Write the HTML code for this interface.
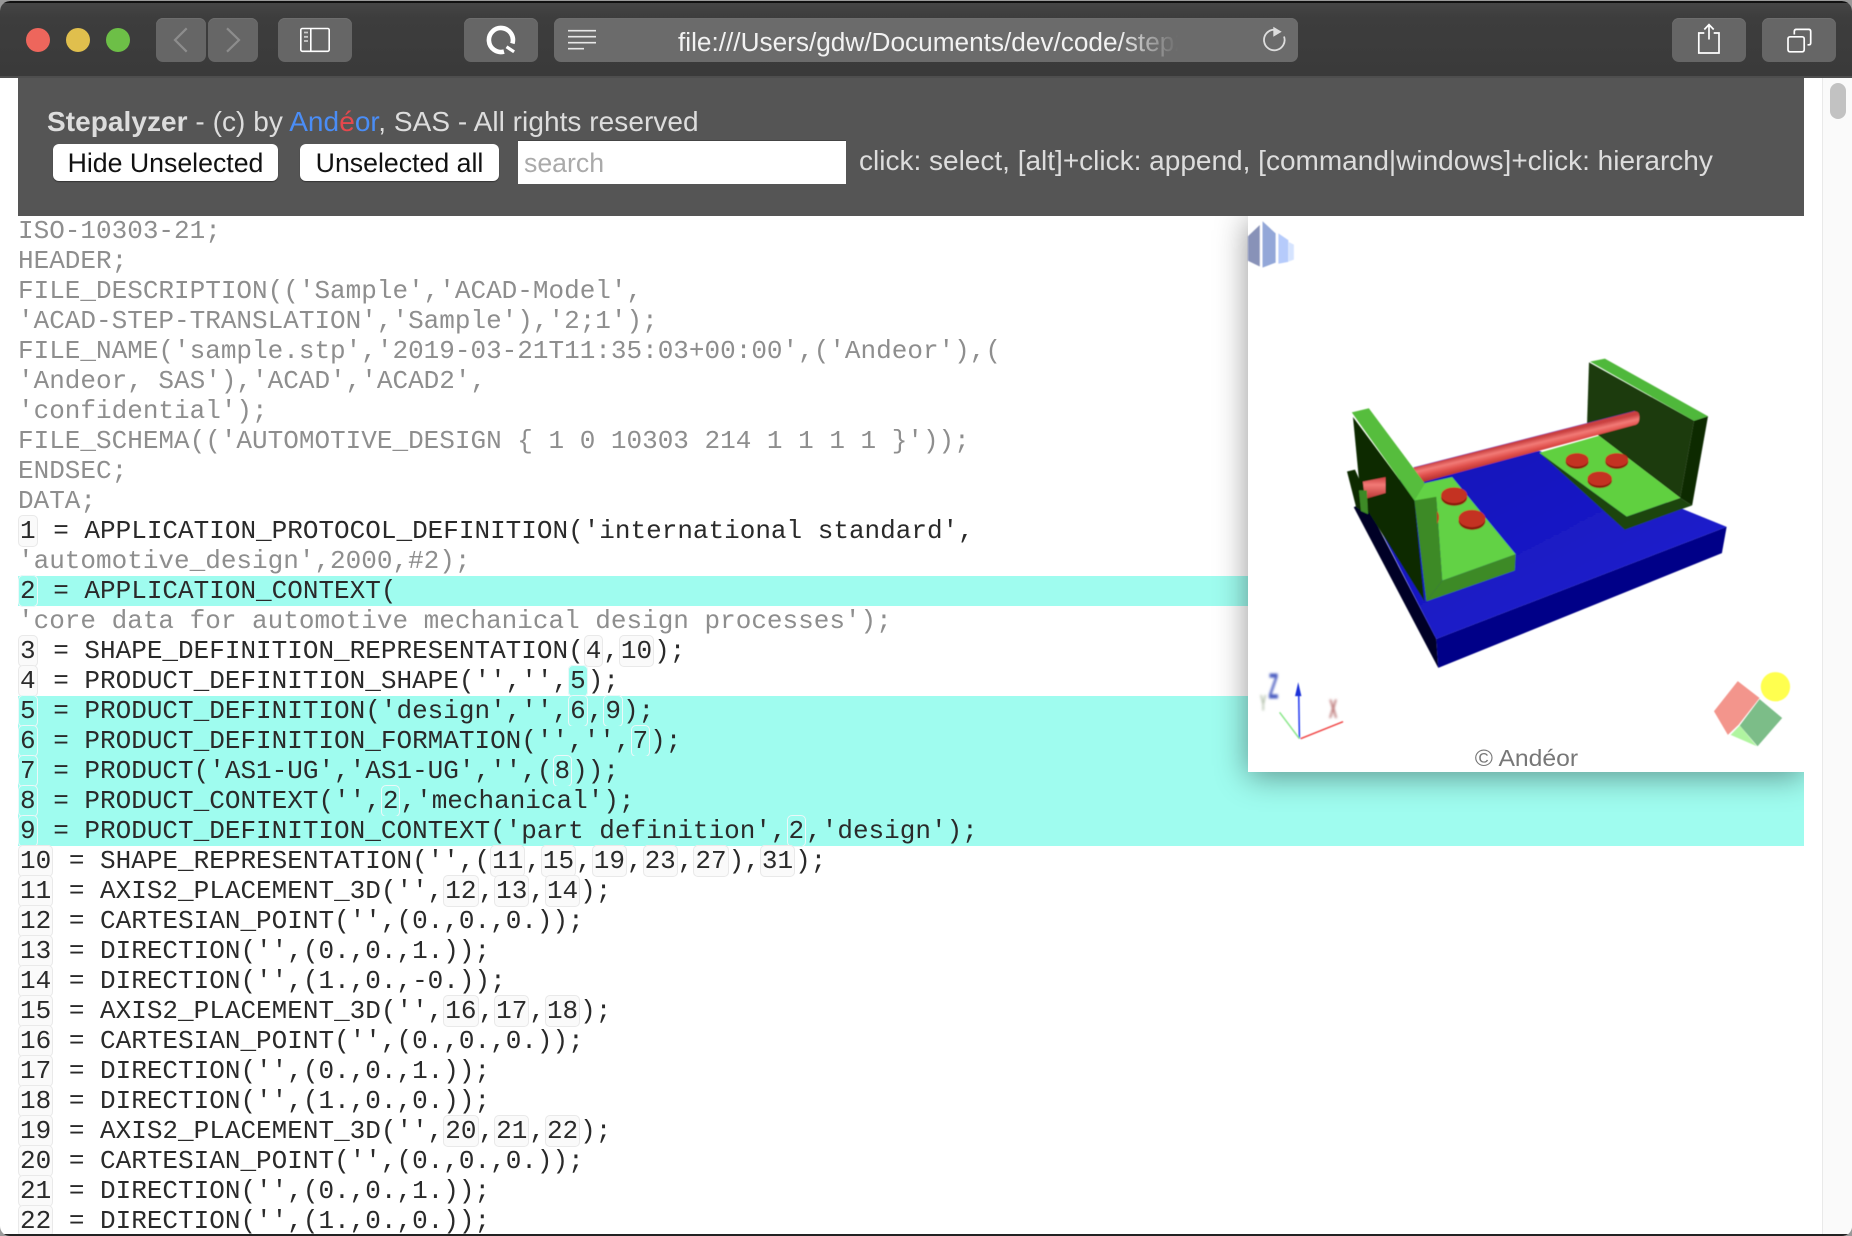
<!DOCTYPE html>
<html><head><meta charset="utf-8"><title>Stepalyzer</title>
<style>
html,body{margin:0;padding:0;width:1852px;height:1236px;overflow:hidden;background:#999}
#win{position:absolute;left:0;top:1px;width:1852px;height:1235px;border-radius:10px;overflow:hidden;background:#fff;font-family:"Liberation Sans",sans-serif}
#tb{position:absolute;left:0;top:0;width:1852px;height:77px;background:linear-gradient(#454545,#3d3d3d 20%,#3a3a3a);border-top:2px solid #111;box-sizing:border-box;border-bottom:2px solid #4e4e4e}
.b{position:absolute;top:15px;height:44px;background:#666;border-radius:7px;box-shadow:inset 0 1px 0 #6e6e6e}
.t{position:absolute;left:0;top:0}
#hd{position:absolute;left:18px;top:77px;width:1786px;height:138px;background:#555;z-index:3;color:#ddd;font-size:28px}
#hd .x{position:absolute;white-space:pre;line-height:32px}
.btn{position:absolute;top:66px;height:37px;background:#fff;border-radius:6px;color:#111;line-height:39px;text-align:center;box-shadow:0 1px 1px rgba(0,0,0,.4);font-size:26.7px}
#srch{position:absolute;left:500px;top:62px;width:328px;height:44px;background:#fff;border-top:1px solid #444;box-sizing:border-box;color:#aaa;line-height:45px;padding-left:6px;font-size:26.7px}
#code{position:absolute;left:0;top:215px;width:1822px;font-family:"Liberation Mono",monospace;font-size:26px;line-height:30px;color:#8e8e8e}
.l{position:absolute;left:18px;width:1786px;height:30px;white-space:pre}
.d{color:#2a2a2a}
.h{background:#9ffcef}
.d i{font-style:normal;border:1px solid #e9e9e9;background:#fafafa;padding:0 1px;border-radius:5px}
.h i{border-color:#ecf8f8;background:#9ffcef}
.d i.s{background:#9ffcef;border-color:#ecf8f8}
#vw{position:absolute;left:1248px;top:215px;width:556px;height:556px;background:#fff;box-shadow:0 4px 30px rgba(0,0,0,.42);z-index:2;clip-path:inset(-40px 0 -40px -40px)}
#sc{position:absolute;left:1822px;top:77px;width:30px;height:1158px;background:#fafafa;border-left:1px solid #e9e9e9;box-sizing:border-box;z-index:4}
#th{position:absolute;left:1830px;top:82px;width:16px;height:36px;border-radius:8px;background:#c2c2c2;z-index:5}
#bot{position:absolute;left:0;bottom:0;width:1852px;height:2px;background:#222;z-index:6}
</style></head><body>
<div id="win">
<div id="tb">
<div class="b" style="left:156px;width:50px"></div>
<div class="b" style="left:208px;width:50px"></div>
<div class="b" style="left:278px;width:74px"></div>
<div class="b" style="left:464px;width:74px"></div>
<div class="b" style="left:554px;width:744px;background:#6b6b6b"></div>
<div class="b" style="left:1672px;width:74px"></div>
<div class="b" style="left:1762px;width:74px"></div>
</div>
<svg class="t" width="1852" height="78" style="top:-1px;z-index:1;position:absolute" fill="none">
<circle cx="38" cy="40" r="12" fill="#ee665c"/><circle cx="78" cy="40" r="12" fill="#e0bf4d"/><circle cx="118" cy="40" r="12" fill="#6dbf47"/>
<path d="M186.7 28.3L175 40l11.7 11.7M227 28.3L239 40l-12 11.7" stroke="#8d8d8d" stroke-width="2.2"/>
<rect x="300.8" y="28.5" width="28.4" height="22.8" rx="1.5" stroke="#fff" stroke-width="1.6"/><path d="M310.8 28.5v22.8" stroke="#fff" stroke-width="1.6"/>
<path d="M304 32.5h4M304 36.8h4M304 41h4" stroke="#ccc" stroke-width="1.8"/>
<path d="M512.4 43.5A12 12 0 1 0 504 51.6" stroke="#fff" stroke-width="4.6"/><path d="M506.5 46.8l7.6 5" stroke="#fff" stroke-width="3.2"/>
<path d="M568 30.7h28M568 36.7h28M568 42.7h28M568 48.7h16" stroke="#e8e8e8" stroke-width="1.7"/>
<path d="M1284 36.5A10.3 10.3 0 1 1 1274 29.7" stroke="#ddd" stroke-width="1.8"/><path d="M1273.3 26.7L1281.7 31.7 1273.3 36.7z" fill="#ddd"/>
<path d="M1704.3 33H1698.8V53H1719V33H1713.7M1709 25V39.5M1704.3 29.5L1709 24.6 1713.7 29.5" stroke="#fff" stroke-width="1.7"/>
<rect x="1788" y="36.8" width="16.2" height="15" rx="2" stroke="#fff" stroke-width="1.7"/>
<path d="M1794.3 34.5V31.5Q1794.3 29.4 1796.4 29.4H1808.6Q1810.7 29.4 1810.7 31.5V43Q1810.7 44.8 1808.8 44.8H1807.5" stroke="#fff" stroke-width="1.7"/>
</svg>
<div style="position:absolute;left:678px;top:19px;width:500px;height:44px;overflow:hidden;white-space:pre;font-size:26.2px;line-height:44px;color:#f2f2f2;-webkit-mask-image:linear-gradient(90deg,#000 88%,transparent);mask-image:linear-gradient(90deg,#000 88%,transparent)">file:///Users/gdw/Documents/dev/code/step2</div>

<div id="hd">
<div class="x" style="left:29px;top:28px;letter-spacing:.05px"><b>Stepalyzer</b> - (c) by <span style="color:#4a8df6">And</span><span style="color:#e5484d">é</span><span style="color:#4a8df6">or</span>, SAS - All rights reserved</div>
<div class="btn" style="left:35px;width:225px">Hide Unselected</div>
<div class="btn" style="left:282px;width:199px">Unselected all</div>
<div id="srch">search</div>
<div class="x" style="left:841px;top:67px">click: select, [alt]+click: append, [command|windows]+click: hierarchy</div>
</div>

<div id="code">
<div class="l" style="top:0">ISO-10303-21;</div>
<div class="l" style="top:30px">HEADER;</div>
<div class="l" style="top:60px">FILE_DESCRIPTION(('Sample','ACAD-Model',</div>
<div class="l" style="top:90px">'ACAD-STEP-TRANSLATION','Sample'),'2;1');</div>
<div class="l" style="top:120px">FILE_NAME('sample.stp','2019-03-21T11:35:03+00:00',('Andeor'),(</div>
<div class="l" style="top:150px">'Andeor, SAS'),'ACAD','ACAD2',</div>
<div class="l" style="top:180px">'confidential');</div>
<div class="l" style="top:210px">FILE_SCHEMA(('AUTOMOTIVE_DESIGN { 1 0 10303 214 1 1 1 1 }'));</div>
<div class="l" style="top:240px">ENDSEC;</div>
<div class="l" style="top:270px">DATA;</div>
<div class="l d" style="top:300px"><i>1</i> = APPLICATION_PROTOCOL_DEFINITION('international standard',</div>
<div class="l" style="top:330px">'automotive_design',2000,#2);</div>
<div class="l d h" style="top:360px"><i>2</i> = APPLICATION_CONTEXT(</div>
<div class="l" style="top:390px">'core data for automotive mechanical design processes');</div>
<div class="l d" style="top:420px"><i>3</i> = SHAPE_DEFINITION_REPRESENTATION(<i>4</i>,<i>10</i>);</div>
<div class="l d" style="top:450px"><i>4</i> = PRODUCT_DEFINITION_SHAPE('','',<i class="s">5</i>);</div>
<div class="l d h" style="top:480px"><i>5</i> = PRODUCT_DEFINITION('design','',<i>6</i>,<i>9</i>);</div>
<div class="l d h" style="top:510px"><i>6</i> = PRODUCT_DEFINITION_FORMATION('','',<i>7</i>);</div>
<div class="l d h" style="top:540px"><i>7</i> = PRODUCT('AS1-UG','AS1-UG','',(<i>8</i>));</div>
<div class="l d h" style="top:570px"><i>8</i> = PRODUCT_CONTEXT('',<i>2</i>,'mechanical');</div>
<div class="l d h" style="top:600px"><i>9</i> = PRODUCT_DEFINITION_CONTEXT('part definition',<i>2</i>,'design');</div>
<div class="l d" style="top:630px"><i>10</i> = SHAPE_REPRESENTATION('',(<i>11</i>,<i>15</i>,<i>19</i>,<i>23</i>,<i>27</i>),<i>31</i>);</div>
<div class="l d" style="top:660px"><i>11</i> = AXIS2_PLACEMENT_3D('',<i>12</i>,<i>13</i>,<i>14</i>);</div>
<div class="l d" style="top:690px"><i>12</i> = CARTESIAN_POINT('',(0.,0.,0.));</div>
<div class="l d" style="top:720px"><i>13</i> = DIRECTION('',(0.,0.,1.));</div>
<div class="l d" style="top:750px"><i>14</i> = DIRECTION('',(1.,0.,-0.));</div>
<div class="l d" style="top:780px"><i>15</i> = AXIS2_PLACEMENT_3D('',<i>16</i>,<i>17</i>,<i>18</i>);</div>
<div class="l d" style="top:810px"><i>16</i> = CARTESIAN_POINT('',(0.,0.,0.));</div>
<div class="l d" style="top:840px"><i>17</i> = DIRECTION('',(0.,0.,1.));</div>
<div class="l d" style="top:870px"><i>18</i> = DIRECTION('',(1.,0.,0.));</div>
<div class="l d" style="top:900px"><i>19</i> = AXIS2_PLACEMENT_3D('',<i>20</i>,<i>21</i>,<i>22</i>);</div>
<div class="l d" style="top:930px"><i>20</i> = CARTESIAN_POINT('',(0.,0.,0.));</div>
<div class="l d" style="top:960px"><i>21</i> = DIRECTION('',(0.,0.,1.));</div>
<div class="l d" style="top:990px"><i>22</i> = DIRECTION('',(1.,0.,0.));</div>
</div>

<div id="vw">
<svg style="position:absolute;left:-18px;top:-6px" width="622" height="590" viewBox="0 0 1568 1568" preserveAspectRatio="none">
<defs>
<linearGradient id="rod" gradientUnits="userSpaceOnUse" x1="465" y1="683" x2="476" y2="727"><stop offset="0" stop-color="#c94040"/><stop offset=".3" stop-color="#f27a76"/><stop offset=".6" stop-color="#e0504c"/><stop offset="1" stop-color="#b02c2a"/></linearGradient>
<linearGradient id="stub" x1="0" y1="0" x2="0" y2="1"><stop offset="0" stop-color="#c94040"/><stop offset=".35" stop-color="#f27a76"/><stop offset="1" stop-color="#b83432"/></linearGradient>
<linearGradient id="bt" x1="0" y1="0" x2="1" y2="1"><stop offset="0" stop-color="#1010b8"/><stop offset="1" stop-color="#2424d2"/></linearGradient>
<filter id="s" x="-5%" y="-5%" width="110%" height="110%"><feGaussianBlur stdDeviation="1.3"/></filter>
<filter id="s2" x="-30%" y="-30%" width="160%" height="160%"><feGaussianBlur stdDeviation="3.5"/></filter>
</defs>
<g filter="url(#s)">
<path d="M45 70L75 40V150L45 135z" fill="#8892b8"/><path d="M82 30L115 62V140L82 153z" fill="#93a7d8"/><path d="M122 62L147 80V138L122 143z" fill="#b6cbfb"/><path d="M148 85L161 92V132L148 137z" fill="#d5e3fe"/>
<path d="M340 770L520 1140 1252 842 780 640 470 690z" fill="url(#bt)"/>
<path d="M520 1140L1252 842 1240 912 525 1217z" fill="#000088"/>
<path d="M340 775L520 1140 525 1217 312 790z" fill="#000028"/>
<path d="M905 405L1170 560 1135 765 930 600 900 570z" fill="#1a3a0c"/>
<path d="M780 645L930 600 1135 765 1000 815z" fill="#60d040"/>
<path d="M780 645L995 850 1165 785 1135 765 1000 815z" fill="#1a4410"/>
<path d="M908 403L945 395 1205 548 1170 560z" fill="#50b83a"/>
<path d="M1170 560L1205 548 1165 785 1135 765z" fill="#0a2a00"/>
<path d="M462 684L1020 534 1022 537 466 688z" fill="#3c30c0"/>
<path d="M462 685L1020 535Q1034 535 1032 553Q1032 570 1018 572L480 725z" fill="url(#rod)"/>
<path d="M310 550L465 770 490 1040 330 770z" fill="#0a2a05"/>
<path d="M295 695L315 690 345 760 348 810 318 790z" fill="#0a2a05"/>
<path d="M335 722L392 710V752L340 768z" fill="url(#stub)"/>
<path d="M325 745L345 745 348 808 330 800z" fill="#3c8a25"/>
<path d="M307 538L350 527 497 735 465 772z" fill="#56bd3c"/>
<path d="M492 726L560 710 720 915 535 985 520 765 465 772z" fill="#62d244"/>
<path d="M465 772L520 762 535 985 495 1040z" fill="#3c8a25"/>
<path d="M535 985L720 915 718 958 495 1040z" fill="#3c8a25"/>
<ellipse cx="565" cy="764" rx="33" ry="22" fill="#8a1a10"/><ellipse cx="565" cy="758" rx="33" ry="21" fill="#c43020"/>
<ellipse cx="610" cy="826" rx="34" ry="24" fill="#8a1a10"/><ellipse cx="610" cy="820" rx="34" ry="23" fill="#c43020"/>
<path d="M522 800Q532 816 522 834z" fill="#c43020"/>
<ellipse cx="875" cy="669" rx="29" ry="19" fill="#8a1a10"/><ellipse cx="875" cy="664" rx="29" ry="18" fill="#c43020"/>
<ellipse cx="975" cy="669" rx="29" ry="19" fill="#8a1a10"/><ellipse cx="975" cy="664" rx="29" ry="18" fill="#c43020"/>
<ellipse cx="932" cy="719" rx="31" ry="20" fill="#8a1a10"/><ellipse cx="932" cy="714" rx="31" ry="19" fill="#c43020"/>
<path d="M1280 1252L1335 1297 1282 1368 1255 1395 1220 1332z" fill="#f3958c"/>
<path d="M1335 1300L1392 1350 1330 1425 1285 1370z" fill="#7cbd88"/>
<path d="M1262 1395L1285 1370 1328 1425z" fill="#b0f5a0"/>
<ellipse cx="1375" cy="1267" rx="37" ry="39" fill="#ffff4f"/>
<path d="M173 1270L175 1405" stroke="#2a3ff0" stroke-width="4"/><path d="M172 1255L164 1292H180z" fill="#1a30d8"/>
<path d="M125 1335L175 1405" stroke="#8fe88f" stroke-width="4"/>
<path d="M178 1405L285 1360" stroke="#f04848" stroke-width="4"/>
</g>
<g filter="url(#s2)" font-family="Liberation Sans,sans-serif" font-weight="bold">
<text transform="translate(97,1298) scale(.43,1)" font-size="95" fill="#4a5cc0">Z</text>
<text transform="translate(76,1330) scale(.4,1)" font-size="58" fill="#a8b8a0">Y</text>
<text transform="translate(250,1350) scale(.42,1)" font-size="72" fill="#b87070">X</text>
</g>
<text x="617" y="1478" font-family="Liberation Sans,sans-serif" font-size="62.3" fill="#777">© Andéor</text>
</svg>
</div>

<div id="sc"></div><div id="th"></div>
<div id="bot"></div>
</div>
</body></html>
